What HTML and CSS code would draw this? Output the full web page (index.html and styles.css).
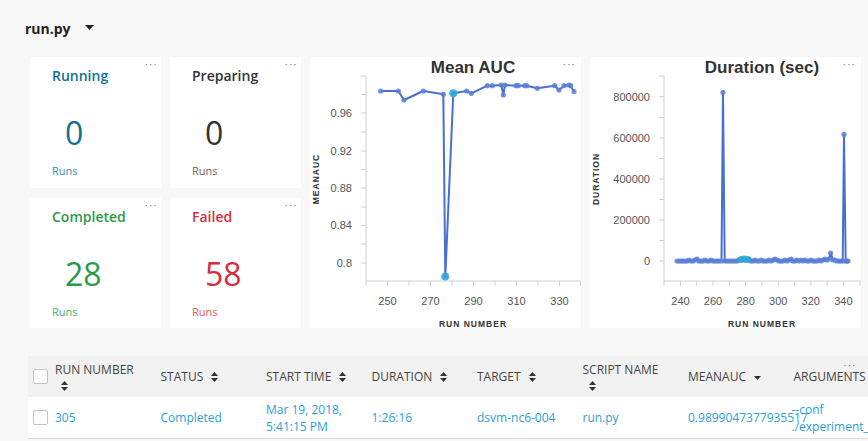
FILE: index.html
```html
<!DOCTYPE html>
<html>
<head>
<meta charset="utf-8">
<link rel="stylesheet" href="styles.css">
</head>
<body>
<div class="topbar">
  <span class="title">run.py</span>
  <svg class="caret" width="9" height="5" viewBox="0 0 9 5"><polygon points="0,0 9,0 4.5,5" fill="#222"/></svg>
</div>

<div class="dashboard">
  <div class="card stat running">
    <span class="more">···</span>
    <div class="stat-title">Running</div>
    <div class="stat-num">0</div>
    <div class="stat-unit">Runs</div>
  </div>
  <div class="card stat preparing">
    <span class="more">···</span>
    <div class="stat-title">Preparing</div>
    <div class="stat-num">0</div>
    <div class="stat-unit">Runs</div>
  </div>
  <div class="card chart chart1">
    <span class="more">···</span>
    <svg width="271" height="271" viewBox="0 0 271 271">
      <defs>
        <marker id="dot1" markerWidth="6" markerHeight="6" refX="3" refY="3" markerUnits="userSpaceOnUse">
          <circle cx="3" cy="3" r="2.6" fill="#5b80d6" fill-opacity="0.85"/>
        </marker>
      </defs>
      <text class="ctitle" x="163" y="16" text-anchor="middle">Mean AUC</text>
      <g class="axis">
        <line x1="56" y1="19" x2="56" y2="224"/>
        <line x1="56" y1="224" x2="271" y2="224"/>
        <line x1="51" y1="19" x2="56" y2="19"/>
        <line x1="51" y1="37.5" x2="56" y2="37.5"/>
        <line x1="51" y1="56" x2="56" y2="56"/>
        <line x1="51" y1="75" x2="56" y2="75"/>
        <line x1="51" y1="94" x2="56" y2="94"/>
        <line x1="51" y1="112.5" x2="56" y2="112.5"/>
        <line x1="51" y1="131" x2="56" y2="131"/>
        <line x1="51" y1="150" x2="56" y2="150"/>
        <line x1="51" y1="168.5" x2="56" y2="168.5"/>
        <line x1="51" y1="187" x2="56" y2="187"/>
        <line x1="51" y1="206" x2="56" y2="206"/>
        <line x1="56" y1="224" x2="56" y2="229"/>
        <line x1="77.5" y1="224" x2="77.5" y2="229"/>
        <line x1="99" y1="224" x2="99" y2="229"/>
        <line x1="120.5" y1="224" x2="120.5" y2="229"/>
        <line x1="142" y1="224" x2="142" y2="229"/>
        <line x1="163.5" y1="224" x2="163.5" y2="229"/>
        <line x1="185" y1="224" x2="185" y2="229"/>
        <line x1="206.5" y1="224" x2="206.5" y2="229"/>
        <line x1="228" y1="224" x2="228" y2="229"/>
        <line x1="249.5" y1="224" x2="249.5" y2="229"/>
        <line x1="270.5" y1="224" x2="270.5" y2="229"/>
      </g>
      <g class="ylab">
        <text x="42" y="60" text-anchor="end">0.96</text>
        <text x="42" y="98" text-anchor="end">0.92</text>
        <text x="42" y="135" text-anchor="end">0.88</text>
        <text x="42" y="172" text-anchor="end">0.84</text>
        <text x="42" y="210" text-anchor="end">0.8</text>
      </g>
      <g class="xlab">
        <text x="77.5" y="248" text-anchor="middle">250</text>
        <text x="120.5" y="248" text-anchor="middle">270</text>
        <text x="163.5" y="248" text-anchor="middle">290</text>
        <text x="206.5" y="248" text-anchor="middle">310</text>
        <text x="249.5" y="248" text-anchor="middle">330</text>
      </g>
      <text class="atitle" x="163" y="270" text-anchor="middle">RUN NUMBER</text>
      <text class="atitle" transform="translate(9,122) rotate(-90)" text-anchor="middle">MEANAUC</text>
      <polyline class="series" marker-start="url(#dot1)" marker-mid="url(#dot1)" marker-end="url(#dot1)"
        points="70.7,34 88.3,34 94,43 113.3,34 133.3,37.3 135.3,219.7 143.3,36.3 156.7,34 161.3,36.3 177.3,28.7 182.3,28.7 191.3,28 193.3,38 195,28 206,28.7 208.3,28.7 214.7,28.7 216.7,28.7 227.3,31.3 244.7,28.7 249,33 254,28.7 259,28 260.7,28.7 264,34.7"/>
      <circle cx="135.3" cy="219.5" r="4" fill="#2fa9d3" fill-opacity="0.85"/>
      <circle cx="143.3" cy="36.3" r="4" fill="#2fa9d3" fill-opacity="0.85"/>
    </svg>
  </div>
  <div class="card chart chart2">
    <span class="more">···</span>
    <svg width="271" height="271" viewBox="0 0 271 271">
      <defs>
        <marker id="dot2" markerWidth="6" markerHeight="6" refX="3" refY="3" markerUnits="userSpaceOnUse">
          <circle cx="3" cy="3" r="2.6" fill="#5b80d6" fill-opacity="0.85"/>
        </marker>
      </defs>
      <text class="ctitle" x="172" y="16" text-anchor="middle">Duration (sec)</text>
      <g class="axis">
        <line x1="74" y1="19" x2="74" y2="224"/>
        <line x1="74" y1="224" x2="271" y2="224"/>
        <line x1="69" y1="19" x2="74" y2="19"/>
        <line x1="69" y1="39.7" x2="74" y2="39.7"/>
        <line x1="69" y1="60.5" x2="74" y2="60.5"/>
        <line x1="69" y1="81" x2="74" y2="81"/>
        <line x1="69" y1="101.5" x2="74" y2="101.5"/>
        <line x1="69" y1="122" x2="74" y2="122"/>
        <line x1="69" y1="142.5" x2="74" y2="142.5"/>
        <line x1="69" y1="163" x2="74" y2="163"/>
        <line x1="69" y1="183.5" x2="74" y2="183.5"/>
        <line x1="69" y1="204" x2="74" y2="204"/>
        <line x1="74" y1="224" x2="74" y2="229"/>
        <line x1="90.5" y1="224" x2="90.5" y2="229"/>
        <line x1="106.7" y1="224" x2="106.7" y2="229"/>
        <line x1="123" y1="224" x2="123" y2="229"/>
        <line x1="139.3" y1="224" x2="139.3" y2="229"/>
        <line x1="155.6" y1="224" x2="155.6" y2="229"/>
        <line x1="171.9" y1="224" x2="171.9" y2="229"/>
        <line x1="188.2" y1="224" x2="188.2" y2="229"/>
        <line x1="204.5" y1="224" x2="204.5" y2="229"/>
        <line x1="220.8" y1="224" x2="220.8" y2="229"/>
        <line x1="237.1" y1="224" x2="237.1" y2="229"/>
        <line x1="253.4" y1="224" x2="253.4" y2="229"/>
        <line x1="270" y1="224" x2="270" y2="229"/>
      </g>
      <g class="ylab">
        <text x="60" y="44" text-anchor="end">800000</text>
        <text x="60" y="85" text-anchor="end">600000</text>
        <text x="60" y="126" text-anchor="end">400000</text>
        <text x="60" y="167" text-anchor="end">200000</text>
        <text x="60" y="208" text-anchor="end">0</text>
      </g>
      <g class="xlab">
        <text x="90.5" y="248" text-anchor="middle">240</text>
        <text x="123" y="248" text-anchor="middle">260</text>
        <text x="155.6" y="248" text-anchor="middle">280</text>
        <text x="188.2" y="248" text-anchor="middle">300</text>
        <text x="220.8" y="248" text-anchor="middle">320</text>
        <text x="253.4" y="248" text-anchor="middle">340</text>
      </g>
      <text class="atitle" x="172" y="270" text-anchor="middle">RUN NUMBER</text>
      <text class="atitle" transform="translate(9,122) rotate(-90)" text-anchor="middle">DURATION</text>
      <polyline class="series" marker-start="url(#dot2)" marker-mid="url(#dot2)" marker-end="url(#dot2)"
        points="87,204 89,204 91,204 93,204 95,204 97,204 99,203 101,204 103,204 105,203 107,202 109,204 111,204 113,204 115,203 117,204 119,204 121,203 123,204 125,204 127,204 129,204 131.5,204 133,35.5 134.7,204 137,204 139,204 141,204 143,204 145,204 147,204 149,203 151,203 153,202 155,203 157,203 159,202 161,204 163,204 165,203 167,204 169,204 171,203 173,204 175,204 177,204 179,203 181,204 183,203 185,202 187,203 189,204 191,204 193,204 195,203 197,204 199,203 201,202 203,204 205,204 207,203 209,204 211,203 213,204 215,203 217,204 219,204 221,203 223,204 225,204 227,204 229,203 231,204 233,203 235,202 237,203 239,202 240.7,196 243,203 245,203 247,204 249,204 251,204 252.7,204 254,77.3 255.7,204 257,204 258,204"/>
      <circle cx="151" cy="202.5" r="3.5" fill="#2fa9d3" fill-opacity="0.85"/>
      <circle cx="154" cy="202" r="3.5" fill="#2fa9d3" fill-opacity="0.85"/>
      <circle cx="157.5" cy="202.5" r="3.5" fill="#2fa9d3" fill-opacity="0.85"/>
    </svg>
  </div>
  <div class="card stat completed">
    <span class="more">···</span>
    <div class="stat-title">Completed</div>
    <div class="stat-num">28</div>
    <div class="stat-unit">Runs</div>
  </div>
  <div class="card stat failed">
    <span class="more">···</span>
    <div class="stat-title">Failed</div>
    <div class="stat-num">58</div>
    <div class="stat-unit">Runs</div>
  </div>
</div>

<div class="table">
  <div class="thead">
    <div class="cell chk"><span class="box"></span></div>
    <div class="cell two"><span>RUN NUMBER</span><svg class="sort" width="7" height="10" viewBox="0 0 7 10"><polygon points="0,4 3.5,0 7,4"/><polygon points="0,6 7,6 3.5,10"/></svg></div>
    <div class="cell"><span>STATUS</span><svg class="sort" width="7" height="10" viewBox="0 0 7 10"><polygon points="0,4 3.5,0 7,4"/><polygon points="0,6 7,6 3.5,10"/></svg></div>
    <div class="cell"><span>START TIME</span><svg class="sort" width="7" height="10" viewBox="0 0 7 10"><polygon points="0,4 3.5,0 7,4"/><polygon points="0,6 7,6 3.5,10"/></svg></div>
    <div class="cell"><span>DURATION</span><svg class="sort" width="7" height="10" viewBox="0 0 7 10"><polygon points="0,4 3.5,0 7,4"/><polygon points="0,6 7,6 3.5,10"/></svg></div>
    <div class="cell"><span>TARGET</span><svg class="sort" width="7" height="10" viewBox="0 0 7 10"><polygon points="0,4 3.5,0 7,4"/><polygon points="0,6 7,6 3.5,10"/></svg></div>
    <div class="cell two"><span>SCRIPT NAME</span><svg class="sort" width="7" height="10" viewBox="0 0 7 10"><polygon points="0,4 3.5,0 7,4"/><polygon points="0,6 7,6 3.5,10"/></svg></div>
    <div class="cell"><span>MEANAUC</span><svg class="sort down" width="7" height="4" viewBox="0 0 7 4"><polygon points="0,0 7,0 3.5,4"/></svg></div>
    <div class="cell args"><span>ARGUMENTS</span><span class="more tmore">···</span></div>
  </div>
  <div class="trow">
    <div class="cell chk"><span class="box"></span></div>
    <div class="cell">305</div>
    <div class="cell">Completed</div>
    <div class="cell">Mar 19, 2018,<br>5:41:15 PM</div>
    <div class="cell">1:26:16</div>
    <div class="cell">dsvm-nc6-004</div>
    <div class="cell">run.py</div>
    <div class="cell val">0.9899047377935517</div>
    <div class="cell argv">--conf<br>./experiment_conf.json</div>
  </div>
</div>
</body>
</html>
```

FILE: styles.css
```css
html, body {
  margin: 0;
  padding: 0;
}
body {
  background: #f8f8f8;
  font-family: "Open Sans", "Noto Sans", sans-serif;
  color: #333;
  width: 868px;
  height: 441px;
  overflow: hidden;
}
.topbar {
  height: 57px;
  display: flex;
  align-items: center;
  padding-left: 25px;
  box-sizing: border-box;
}
.title {
  font-size: 14px;
  font-weight: 700;
  color: #222;
}
.caret {
  margin-left: 14px;
  margin-top: -3px;
}
.dashboard {
  display: grid;
  grid-template-columns: 131px 131px 271px 271px;
  grid-template-rows: 131px 130px;
  gap: 10px 9px;
  margin-left: 30px;
}
.card {
  background: #fff;
  position: relative;
}
.running { grid-column: 1; grid-row: 1; }
.preparing { grid-column: 2; grid-row: 1; }
.completed { grid-column: 1; grid-row: 2; }
.failed { grid-column: 2; grid-row: 2; }
.chart1 { grid-column: 3; grid-row: 1 / 3; }
.chart2 { grid-column: 4; grid-row: 1 / 3; }
.chart svg {
  display: block;
}
.more {
  position: absolute;
  top: 1px;
  right: 3px;
  font-size: 11px;
  line-height: 12px;
  letter-spacing: 1.5px;
  color: #888;
}
.chart .more {
  right: 5px;
}
.stat {
  box-sizing: border-box;
  padding: 9px 0 0 22px;
  display: flex;
  flex-direction: column;
}
.stat-title {
  font-size: 14px;
  font-weight: 600;
  line-height: 20px;
}
.stat-num {
  font-size: 32px;
  line-height: 40px;
  margin: 27px 0 0 13px;
}
.stat-unit {
  font-size: 11px;
  line-height: 16px;
  margin-top: 10px;
}
.running .stat-title, .running .stat-num { color: #11708f; }
.running .stat-unit { color: #3a8cad; }
.preparing .stat-title, .preparing .stat-num { color: #333; }
.preparing .stat-unit { color: #7b6048; }
.completed .stat-title, .completed .stat-num { color: #2b9a47; }
.completed .stat-unit { color: #4bae63; }
.failed .stat-title, .failed .stat-num { color: #d42e40; }
.failed .stat-unit { color: #e05262; }

.ctitle {
  font-family: "Liberation Sans", Arial, sans-serif;
  font-size: 17px;
  font-weight: 700;
  fill: #333;
}
.axis line {
  stroke: #ccd0d6;
  stroke-width: 1;
}
.ylab text, .xlab text {
  font-family: "Liberation Sans", Arial, sans-serif;
  font-size: 11px;
  fill: #555;
}
.atitle {
  font-family: "Liberation Sans", Arial, sans-serif;
  font-size: 8.5px;
  font-weight: 700;
  letter-spacing: 1px;
  fill: #333;
}
.series {
  fill: none;
  stroke: #4a70cf;
  stroke-width: 2;
  stroke-linejoin: round;
}

.table {
  margin: 28px 0 0 28px;
  width: 840px;
  overflow: hidden;
}
.thead, .trow {
  display: grid;
  grid-template-columns: 27px repeat(8, 105.5px);
}
.thead {
  height: 41px;
  background: #f2f2f2;
}
.trow {
  height: 41px;
  background: #fff;
  border-bottom: 1px solid #dcdcdc;
}
.cell {
  display: flex;
  align-items: center;
  font-size: 12px;
  white-space: nowrap;
}
.thead .cell {
  color: #444;
  text-transform: uppercase;
}
.thead .cell .sort {
  margin-left: 8px;
  fill: #333;
}
.thead .cell .sort.down {
  margin-top: 3px;
}
.thead .cell.two {
  flex-direction: column;
  align-items: flex-start;
  justify-content: center;
  line-height: 16px;
}
.thead .cell.two .sort {
  margin: 3px 0 0 6px;
}
.args {
  position: relative;
}
.tmore {
  right: auto;
  left: 50px;
  top: 3px;
}
.trow .cell {
  color: #2a9fd8;
  font-size: 12px;
  line-height: 17px;
}
.chk .box {
  display: block;
  width: 13px;
  height: 13px;
  border: 1px solid #c4c4c4;
  background: #fff;
  border-radius: 2px;
  margin-left: 5px;
}
.trow .argv {
  margin-left: -2px;
  position: relative;
  z-index: 1;
}
```
